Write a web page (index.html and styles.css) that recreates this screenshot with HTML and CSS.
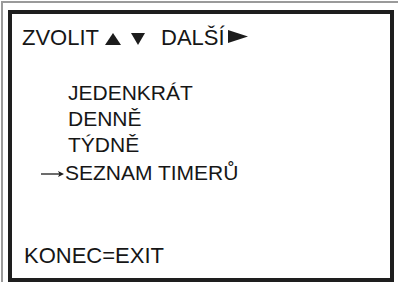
FILE: index.html
```html
<!DOCTYPE html>
<html>
<head>
<meta charset="utf-8">
<link rel="stylesheet" href="styles.css">
</head>
<body>
<div class="frame">
  <div class="screen">
    <div class="header">
      <span class="label">ZVOLIT</span>
      <svg class="tri up" width="16" height="12" viewBox="0 0 16 12"><polygon points="8,0 16,12 0,12" fill="#1c1c1c"/></svg>
      <svg class="tri down" width="14" height="12" viewBox="0 0 14 12"><polygon points="0,0 14,0 7,12" fill="#1c1c1c"/></svg>
      <span class="label next">DALŠÍ</span>
      <svg class="tri right" width="20" height="13" viewBox="0 0 20 13"><polygon points="0,0 20,6.5 0,13" fill="#1c1c1c"/></svg>
    </div>
    <ul class="menu">
      <li class="item">JEDENKRÁT</li>
      <li class="item">DENNĚ</li>
      <li class="item">TÝDNĚ</li>
      <li class="item selected"><svg class="arrow" width="23" height="8" viewBox="0 0 23 8"><line x1="0" y1="4" x2="21" y2="4" stroke="#1c1c1c" stroke-width="1.3"/><polygon points="17,1 23,4 17,7 18.5,4" fill="#1c1c1c"/></svg>SEZNAM TIMERŮ</li>
    </ul>
    <div class="footer">KONEC=EXIT</div>
  </div>
</div>
</body>
</html>
```

FILE: styles.css
```css
html, body {
  margin: 0;
  padding: 0;
  background: #ffffff;
}
body {
  width: 398px;
  height: 284px;
  overflow: hidden;
  font-family: "Liberation Sans", Arial, sans-serif;
  color: #161616;
}
.frame {
  margin: 1px 0 0 1px;
  border-top: 2px solid #9a9a9a;
  border-left: 2px solid #9a9a9a;
  padding: 7px 0 0 5px;
  height: 281px;
  box-sizing: border-box;
}
.screen {
  width: 386px;
  height: 272px;
  box-sizing: border-box;
  border: 4px solid #1e1e1e;
  display: flex;
  flex-direction: column;
  padding: 11px 0 10px 10px;
}
.header {
  display: flex;
  align-items: flex-start;
  height: 25px;
  font-size: 22px;
  line-height: 25px;
}
.tri.up {
  margin-left: 6px;
  margin-top: 8px;
}
.tri.down {
  margin-left: 10px;
  margin-top: 8px;
}
.label.next {
  margin-left: 16px;
}
.tri.right {
  margin-left: 3px;
  margin-top: 5px;
}
.menu {
  list-style: none;
  margin: 30px 0 0 0;
  padding: 0 0 0 46px;
  font-size: 21px;
  line-height: 26px;
}
.item.selected {
  margin-top: 2px;
  margin-left: -3px;
  display: flex;
  align-items: flex-start;
}
.arrow {
  margin-left: -24px;
  margin-right: 1px;
  margin-top: 10px;
  flex: none;
}
.footer {
  margin-top: auto;
  font-size: 22px;
  line-height: 25px;
  padding-left: 2px;
}
```
